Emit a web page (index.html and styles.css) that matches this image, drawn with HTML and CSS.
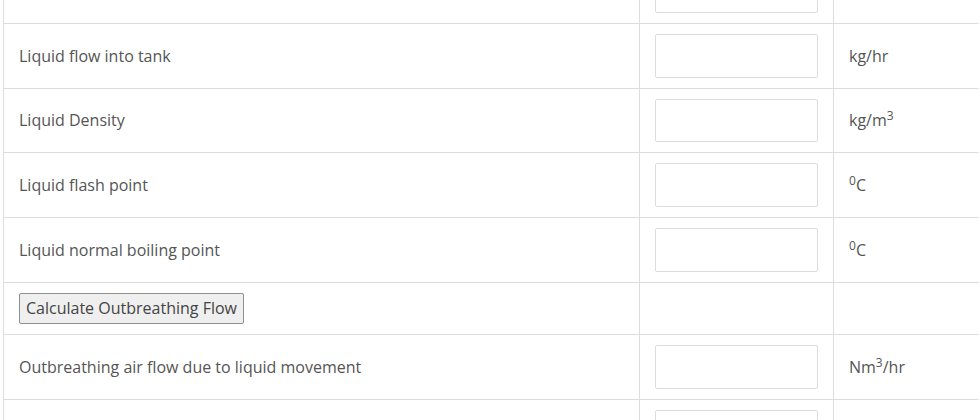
FILE: index.html
```html
<!DOCTYPE html>
<html>
<head>
<meta charset="utf-8">
<link rel="stylesheet" href="styles.css">
</head>
<body>
<div class="page">
<table class="calc">
  <colgroup><col class="c1"><col class="c2"><col class="c3"></colgroup>
  <tbody>
    <tr><td></td><td><input type="text" class="field"></td><td></td></tr>
    <tr><td>Liquid flow into tank</td><td><input type="text" class="field"></td><td>kg/hr</td></tr>
    <tr><td>Liquid Density</td><td><input type="text" class="field"></td><td>kg/m<sup>3</sup></td></tr>
    <tr><td>Liquid flash point</td><td><input type="text" class="field"></td><td><sup>0</sup>C</td></tr>
    <tr><td>Liquid normal boiling point</td><td><input type="text" class="field"></td><td><sup>0</sup>C</td></tr>
    <tr><td><button type="button" class="btn">Calculate Outbreathing Flow</button></td><td></td><td></td></tr>
    <tr><td>Outbreathing air flow due to liquid movement</td><td><input type="text" class="field"></td><td>Nm<sup>3</sup>/hr</td></tr>
    <tr><td>Outbreathing air flow due to thermal effects</td><td><input type="text" class="field"></td><td>Nm<sup>3</sup>/hr</td></tr>
  </tbody>
</table>
</div>
</body>
</html>
```

FILE: styles.css
```css
html, body {
  margin: 0;
  padding: 0;
  background: #fff;
  overflow: hidden;
}
.page {
  padding-left: 3px;
  margin-top: -42px;
  font-family: "Open Sans", "Liberation Sans", sans-serif;
  font-size: 16px;
  color: #555;
}
.calc {
  border-collapse: collapse;
  width: 976px;
  table-layout: fixed;
}
.c1 { width: 636px; }
.c2 { width: 194px; }
.calc td {
  border: 1px solid #dddddd;
  border-right: none;
  padding: 10px 15px;
  vertical-align: middle;
  line-height: 22px;
}
.calc td:nth-child(2) { border-right: 1px solid #dddddd; }
.field {
  display: block;
  box-sizing: border-box;
  width: 100%;
  height: 43.8px;
  margin: 0;
  border: 1px solid #dcdcdc;
  border-radius: 2px;
  background: #fff;
}
sup {
  font-size: 12px;
  line-height: 0;
  vertical-align: 6px;
}
.btn {
  display: block;
  height: 31px;
  padding: 0 6px;
  margin: 0;
  font-family: "Open Sans", "Liberation Sans", sans-serif;
  font-size: 16px;
  color: #444;
  background: #efefef;
  border: 1px solid #8f8f8f;
  border-radius: 2px;
}
```
